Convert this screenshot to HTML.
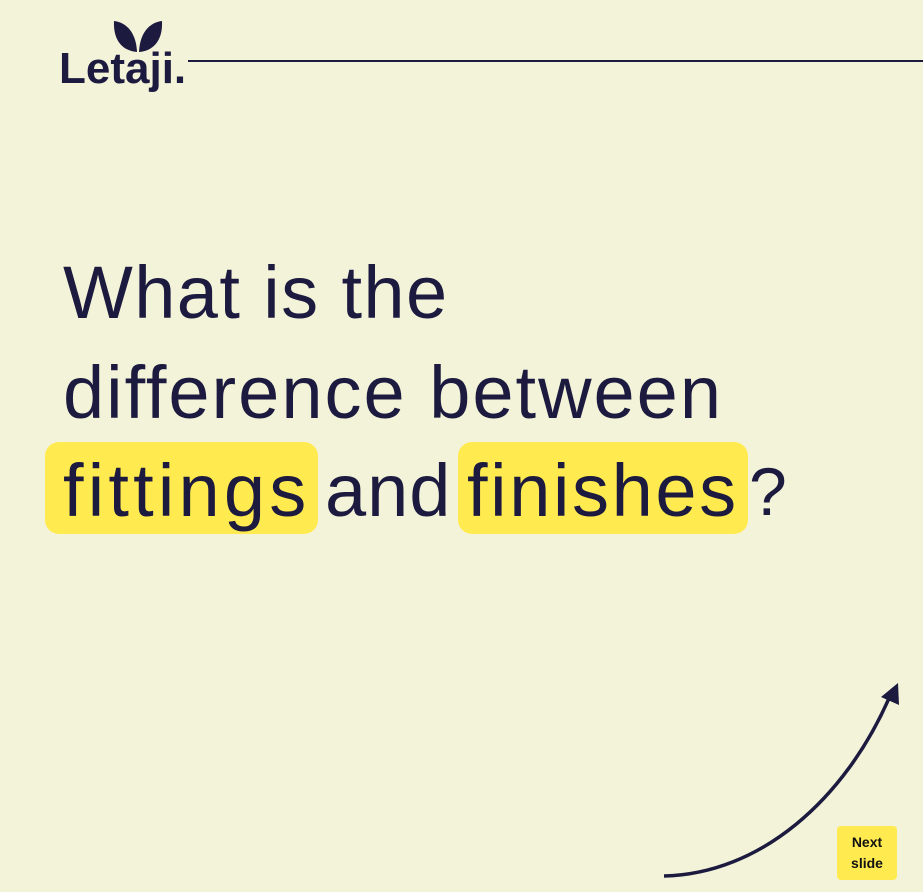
<!DOCTYPE html>
<html><head><meta charset="utf-8"><style>
html,body{margin:0;padding:0}
body{width:923px;height:892px;background:#f3f3da;position:relative;overflow:hidden;font-family:"Liberation Sans",sans-serif;color:#1c1a3e}
.logo{position:absolute;left:59px;top:44px;font-size:44px;font-weight:bold;letter-spacing:0}
.line{position:absolute;left:188px;top:60px;width:735px;height:1.5px;background:#1c1a3e}
.h{position:absolute;font-size:74px;white-space:nowrap;letter-spacing:2px}
.hl{position:absolute;background:#ffeb4f;border-radius:14px}
.btn{position:absolute;left:837px;top:826px;width:60px;height:54px;background:#ffeb4f;border-radius:4px;font-size:14px;font-weight:bold;text-align:center;line-height:21px;padding-top:6px;box-sizing:border-box;color:#111}
</style></head><body>
<svg style="position:absolute;left:110px;top:18px" width="56" height="38" viewBox="0 0 56 38">
<path d="M4 3 C14 4 26 12 27 34 C14 33 3 24 4 3Z" fill="#1c1a3e"/>
<path d="M52 3 C42 4 30 12 29 34 C42 33 53 24 52 3Z" fill="#1c1a3e"/>
</svg>
<div class="logo">Letaji.</div>
<div class="line"></div>
<div class="hl" style="left:45px;top:442px;width:273px;height:92px"></div>
<div class="hl" style="left:458px;top:442px;width:290px;height:92px"></div>
<div class="h" style="top:250px;left:63px;letter-spacing:1.4px">What is the</div>
<div class="h" style="top:350px;left:63px">difference between</div>
<div class="h" style="top:448px;left:63px;letter-spacing:4.2px">fittings</div>
<div class="h" style="top:448px;left:325px;letter-spacing:1px">and</div>
<div class="h" style="top:448px;left:467px;letter-spacing:2.6px">finishes</div>
<div class="h" style="top:448px;left:749px;font-size:68px;margin-top:5px">?</div>
<svg style="position:absolute;left:0;top:0" width="923" height="892">
<path d="M664 876 C760 874 845 800 890 696" fill="none" stroke="#1c1a3e" stroke-width="3.5"/>
<path d="M881 697 L898 683 L899 705Z" fill="#1c1a3e"/>
</svg>
<div class="btn">Next<br>slide</div>
</body></html>
